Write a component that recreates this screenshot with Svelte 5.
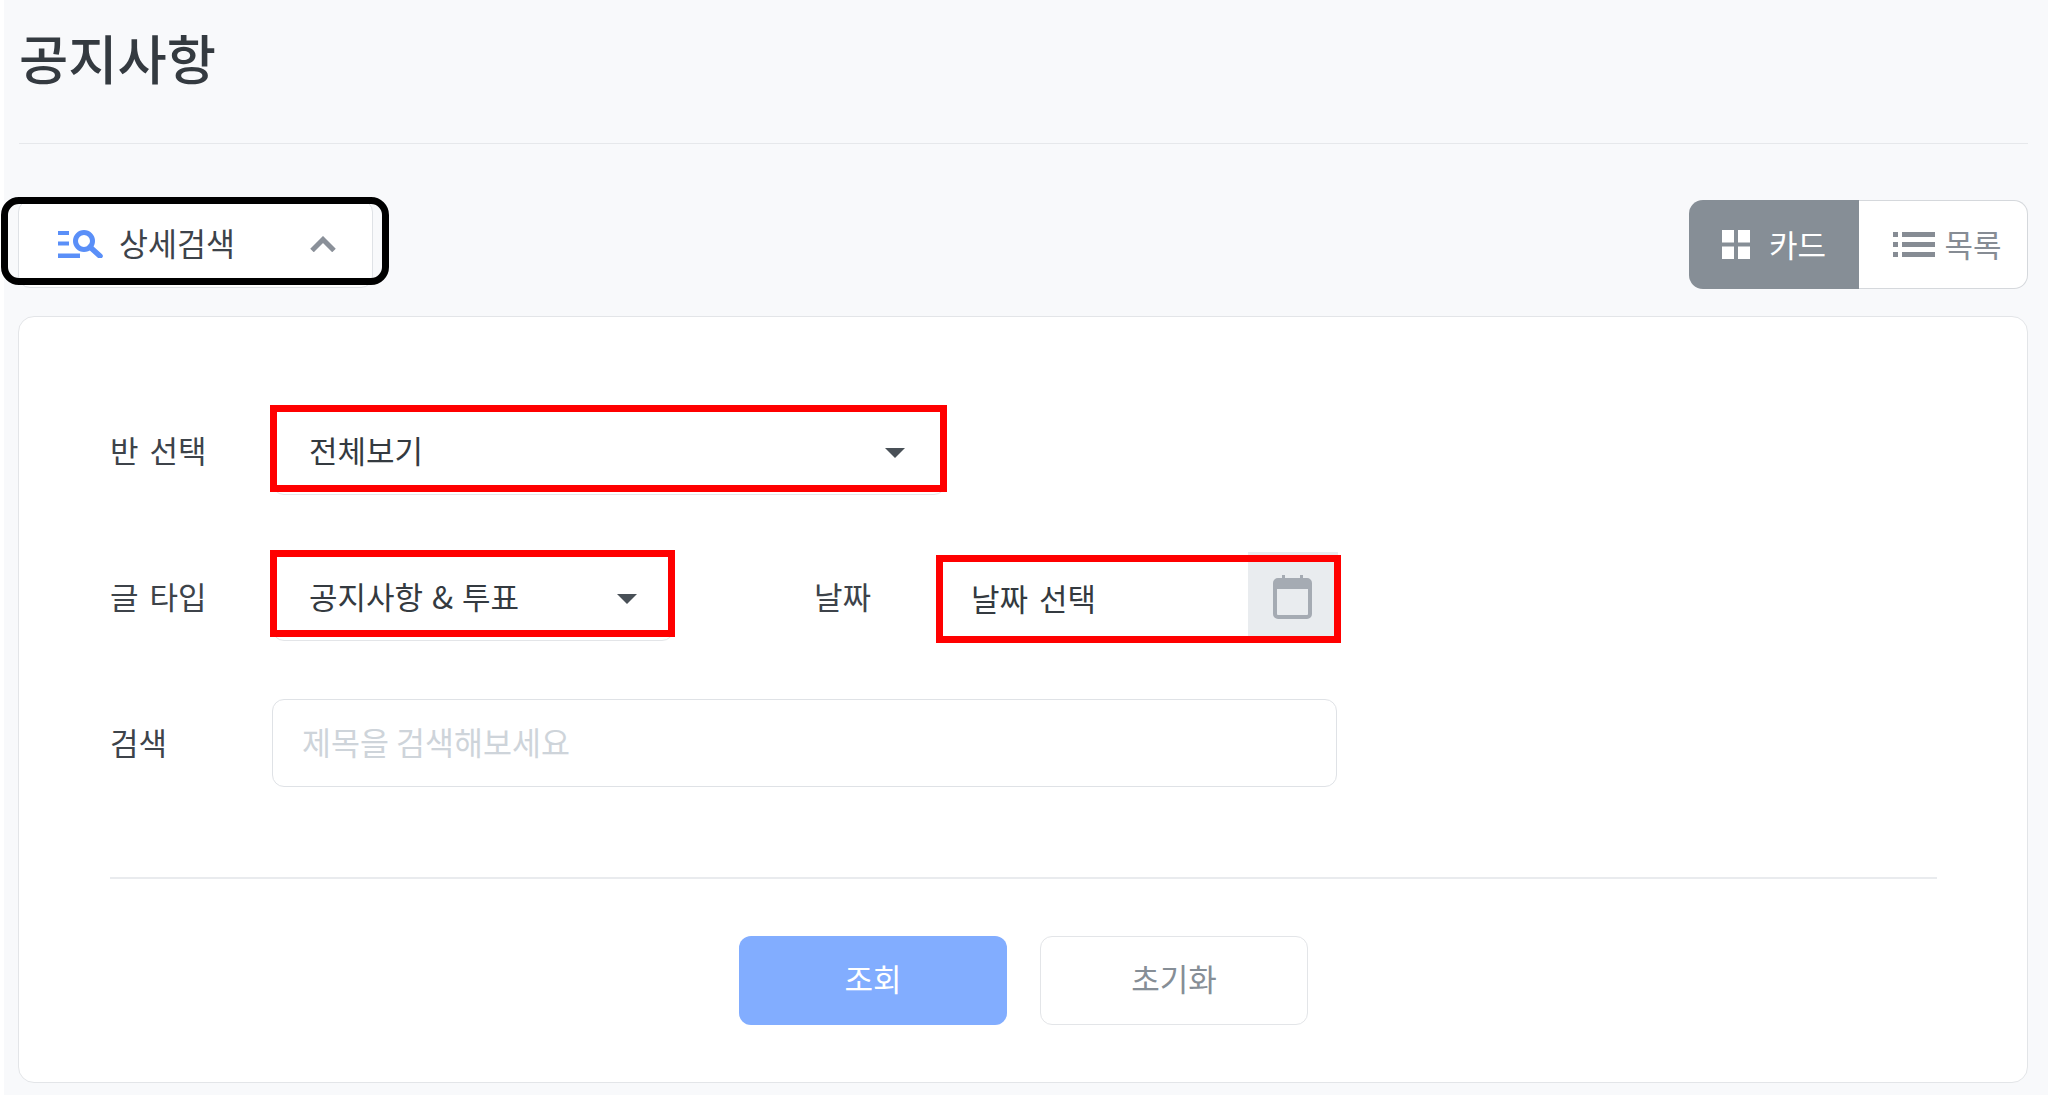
<script>
	const rowLabel = { cls: '반 선택', type: '글 타입', date: '날짜', search: '검색' };
</script>

<div class="page">
	<header class="title-bar">
		<h1>공지사항</h1>
	</header>

	<div class="toolbar">
		<button class="detail-toggle">
			<svg class="search-icon" viewBox="0 0 45 28" width="45" height="28">
				<path d="M0 1h11v4H0zM0 11.500h11v4H0zM0 23.500h22V28H0z" fill="#5a8ff8" />
				<circle cx="26" cy="11" r="8.500" fill="none" stroke="#5a8ff8" stroke-width="5" />
				<path d="M32 17l10 9" fill="none" stroke="#5a8ff8" stroke-width="5.500" stroke-linecap="round" />
			</svg>
			<span class="detail-text">상세검색</span>
			<svg class="chevron" viewBox="0 0 26 16" width="26" height="16">
				<path d="M2 14.500L13 3.500 24 14.500" fill="none" stroke="#8a9099" stroke-width="5" />
			</svg>
			<span class="mark-black"></span>
		</button>

		<div class="view-switch">
			<button class="view-btn active">
				<svg viewBox="0 0 28 29" width="28" height="29">
					<path d="M0 0h12v12.500H0zM16 0h12v12.500H16zM0 16.500h12V29H0zM16 16.500h12V29H16z" fill="#fff" />
				</svg>
				<span>카드</span>
			</button>
			<button class="view-btn list">
				<svg viewBox="0 0 42 25" width="42" height="25">
					<path d="M0 0h5v5H0zM0 10h5v5H0zM0 20h5v5H0zM9 0h33v5H9zM9 10h33v5H9zM9 20h33v5H9z" fill="#868c94" />
				</svg>
				<span>목록</span>
			</button>
		</div>
	</div>

	<section class="card">
		<div class="row">
			<span class="label">{rowLabel.cls}</span>
			<div class="select wide">
				<span>전체보기</span>
				<i class="caret"></i>
				<span class="mark-red"></span>
			</div>
		</div>

		<div class="row">
			<span class="label">{rowLabel.type}</span>
			<div class="select narrow">
				<span>공지사항 &amp; 투표</span>
				<i class="caret"></i>
				<span class="mark-red narrow-mark"></span>
			</div>
			<span class="label date-label">{rowLabel.date}</span>
			<div class="date-field">
				<span class="date-text">날짜 선택</span>
				<span class="date-btn">
					<svg viewBox="0 0 39 44" width="39" height="44">
						<path d="M9 0h3v6H9zM27 0h3v6h-3z" fill="#a5abb3" />
						<rect x="2" y="5" width="35" height="37" rx="3" fill="none" stroke="#a5abb3" stroke-width="4" />
						<rect x="2" y="5" width="35" height="9" fill="#a5abb3" />
					</svg>
				</span>
				<span class="mark-red date-mark"></span>
			</div>
		</div>

		<div class="row">
			<span class="label">{rowLabel.search}</span>
			<input class="search" type="text" placeholder="제목을 검색해보세요" />
		</div>

		<hr />

		<div class="actions">
			<button class="btn primary">조회</button>
			<button class="btn">초기화</button>
		</div>
	</section>
</div>

<style>
	:global(body) {
		background: #fff;
		font-family: 'Noto Sans CJK KR', 'Noto Sans', sans-serif;
		word-spacing: 4px;
	}
	.page {
		box-sizing: border-box;
		height: 1095px;
		margin-left: 4px;
		padding: 0 20px 0 14px;
		background: #f8f9fb;
	}
	button {
		font-family: inherit;
		cursor: pointer;
	}
	.title-bar {
		height: 144px;
		box-sizing: border-box;
		margin-left: 1px;
		border-bottom: 1px solid #e6e8eb;
	}
	h1 {
		margin: 0;
		font-size: 53.500px;
		line-height: 114px;
		font-weight: 500;
		color: #343a40;
	}
	.toolbar {
		display: flex;
		justify-content: space-between;
		align-items: flex-start;
		margin-top: 56px;
		height: 89px;
	}
	.detail-toggle {
		position: relative;
		display: flex;
		align-items: center;
		box-sizing: border-box;
		width: 355px;
		height: 88px;
		padding: 0 36px 0 39px;
		background: #fff;
		border: 1px solid #dfe2e6;
		border-radius: 12px;
	}
	.detail-text {
		margin-left: 16px;
		padding-bottom: 4px;
		font-size: 31.500px;
		color: #3d434a;
	}
	.chevron {
		margin-left: auto;
	}
	.mark-black {
		position: absolute;
		left: -18px;
		right: -17px;
		top: -4px;
		bottom: 2px;
		border: 7px solid #000;
		border-radius: 18px;
	}
	.view-switch {
		display: flex;
		height: 89px;
	}
	.view-btn {
		display: flex;
		align-items: center;
		justify-content: center;
		box-sizing: border-box;
		gap: 9px;
		height: 100%;
		padding: 0;
		font-size: 31px;
		background: #fff;
		color: #868c94;
		border: 1px solid #d5d8dc;
		border-left: none;
		border-radius: 0 14px 14px 0;
		width: 169px;
	}
	.view-btn.list {
		padding-left: 9px;
	}
	.view-btn span {
		padding-bottom: 3px;
	}
	.view-btn.active {
		width: 170px;
		gap: 19px;
		background: #868e96;
		color: #fff;
		border: none;
		border-radius: 14px 0 0 14px;
	}
	.card {
		box-sizing: border-box;
		height: 767px;
		margin-top: 27px;
		padding: 90px 90px 0 91px;
		background: #fff;
		border: 1px solid #e3e5e8;
		border-radius: 16px;
	}
	.row {
		display: flex;
		align-items: center;
		height: 88px;
		margin-bottom: 58px;
	}
	.label {
		width: 162px;
		flex-shrink: 0;
		padding-bottom: 4px;
		font-size: 31px;
		color: #3d434a;
	}
	.select {
		position: relative;
		display: flex;
		align-items: center;
		justify-content: space-between;
		box-sizing: border-box;
		height: 88px;
		padding: 0 40px 3px 36px;
		font-size: 31px;
		color: #343a40;
		background: #fff;
		border: 1px solid #e3e5e8;
		border-radius: 12px;
	}
	.select.wide {
		width: 674px;
	}
	.select.narrow {
		width: 402px;
		padding-right: 36px;
		word-spacing: 2px;
	}
	.caret {
		width: 0;
		height: 0;
		margin-top: 6px;
		border-left: 10px solid transparent;
		border-right: 10px solid transparent;
		border-top: 10px solid #495057;
	}
	.mark-red {
		position: absolute;
		left: -3px;
		right: -2px;
		top: -3px;
		bottom: 2px;
		border: 7px solid #f00;
	}
	.narrow-mark {
		top: -4px;
		bottom: 3px;
	}
	.date-label {
		width: 124px;
		margin-left: 140px;
	}
	.date-field {
		position: relative;
		display: flex;
		align-items: stretch;
		box-sizing: border-box;
		width: 400px;
		height: 90px;
		background: #fff;
		border-radius: 12px;
	}
	.date-text {
		display: flex;
		align-items: center;
		flex: 1;
		padding-left: 33px;
		font-size: 31px;
		color: #343a40;
	}
	.date-btn {
		display: flex;
		align-items: center;
		justify-content: center;
		width: 90px;
		padding-right: 2px;
		box-sizing: border-box;
		background: #e9ecef;
	}
	.date-mark {
		left: -2px;
		right: -3px;
		top: 3px;
		bottom: -1px;
	}
	.search {
		box-sizing: border-box;
		width: 1065px;
		height: 88px;
		padding: 0 29px 5px;
		font-family: inherit;
		font-size: 31.500px;
		background: #fff;
		border: 1px solid #dfe2e6;
		border-radius: 12px;
		outline: none;
	}
	.search::placeholder {
		color: #ced4da;
	}
	hr {
		margin: 90px 0 0;
		border: none;
		border-top: 2px solid #e9ebee;
	}
	.actions {
		display: flex;
		justify-content: center;
		gap: 33px;
		margin-top: 57px;
	}
	.btn {
		box-sizing: border-box;
		width: 268px;
		height: 89px;
		padding: 0 0 6px;
		font-size: 31px;
		color: #868e96;
		background: #fff;
		border: 1px solid #e3e5e8;
		border-radius: 12px;
	}
	.btn.primary {
		color: #fff;
		background: #82adff;
		border: none;
	}
</style>
